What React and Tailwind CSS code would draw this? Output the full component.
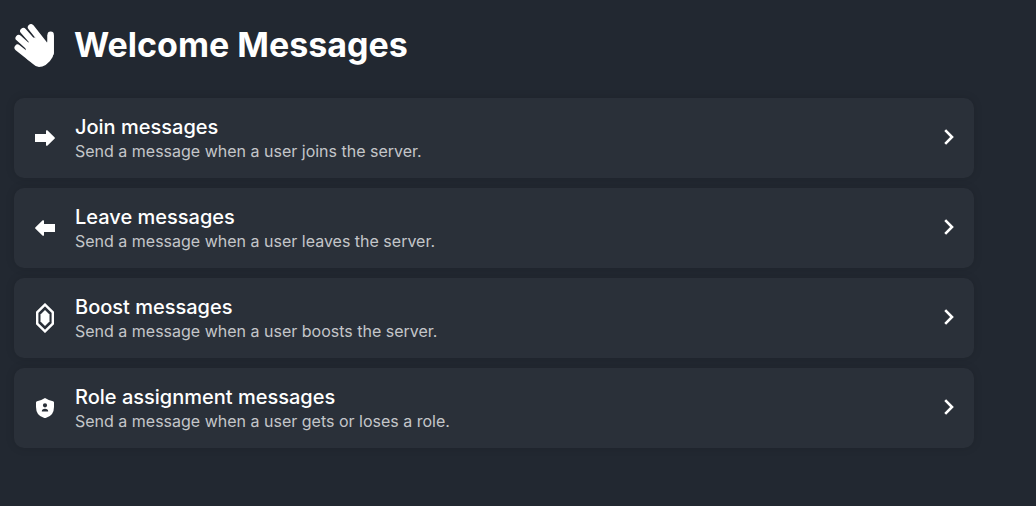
function WaveIcon() {
  return (
    <svg viewBox="42 42 120 129" className="h-[43px] w-10 shrink-0" aria-hidden="true">
      <g stroke="currentColor" strokeWidth="19" strokeLinecap="round" fill="none">
        <path d="M93 52L132 101" />
        <path d="M70 63L108 106" />
        <path d="M56 84L98 122" />
        <path d="M53 113L92 144" />
        <path d="M152 74V128" />
      </g>
      <path
        fill="currentColor"
        d="M102 82L137 99Q142 101 142.500 94V74L161.500 76V128Q160 142 150 153L137 165Q127 171 117 171Q106 170 96 160L80 146L76 106L87 96Z"
      />
    </svg>
  )
}

function ArrowRightIcon() {
  return (
    <svg viewBox="0 0 20 16" className="h-4 w-5" fill="currentColor">
      <path d="M0 4H11V.8Q11.2 -.2 12.300 .3L19.500 7.200Q20.300 8 19.500 8.800L12.300 15.700Q11.200 16.200 11 15.200V12H0Z" />
    </svg>
  )
}

function ArrowLeftIcon() {
  return (
    <svg viewBox="0 0 20 16" className="h-4 w-5" fill="currentColor">
      <path d="M20 4H9V.8Q8.800 -.2 7.700 .3L.5 7.200Q-.3 8 .5 8.800L7.700 15.700Q8.800 16.200 9 15.200V12H20Z" />
    </svg>
  )
}

function BoostIcon() {
  return (
    <svg viewBox="0 0 18 30" className="h-[30px] w-[18px]">
      <path
        fill="none"
        stroke="currentColor"
        strokeWidth="2.4"
        d="M9 1.6L16.8 9.3V20.7L9 28.4L1.2 20.7V9.3Z"
      />
      <path fill="currentColor" d="M9 7L13.5 11.5V18.5L9 23L4.5 18.5V11.5Z" />
    </svg>
  )
}

function ShieldIcon() {
  return (
    <svg viewBox="0 0 18 20" className="h-5 w-[18px]" fill="currentColor">
      <path
        fillRule="evenodd"
        d="M9 0Q12.5 2.2 17 3.2Q18 3.5 18 4.5V9Q18 17.5 10.2 19.8Q9 20.2 7.8 19.8Q0 17.5 0 9V4.5Q0 3.5 1 3.2Q5.5 2.2 9 0ZM9 5.2A2.1 2.1 0 1 0 9 9.4A2.1 2.1 0 1 0 9 5.2ZM5.8 13.6H12.2Q12.2 10.8 9 10.8Q5.8 10.8 5.8 13.6Z"
      />
    </svg>
  )
}

const items = [
  {
    title: 'Join messages',
    description: 'Send a message when a user joins the server.',
    icon: ArrowRightIcon,
  },
  {
    title: 'Leave messages',
    description: 'Send a message when a user leaves the server.',
    icon: ArrowLeftIcon,
  },
  {
    title: 'Boost messages',
    description: 'Send a message when a user boosts the server.',
    icon: BoostIcon,
  },
  {
    title: 'Role assignment messages',
    description: 'Send a message when a user gets or loses a role.',
    icon: ShieldIcon,
  },
]

function MessageCard({ title, description, icon: Icon }) {
  return (
    <button
      type="button"
      className="flex w-full items-center rounded-[10px] bg-[#2a3039] px-5 py-4 text-left shadow-[0_0_10px_rgba(0,0,0,0.12)]"
    >
      <span className="mr-[19px] flex w-[22px] shrink-0 justify-center" aria-hidden="true">
        <Icon />
      </span>
      <span className="min-w-0 flex-1">
        <span className="block text-xl leading-[26px] font-medium text-white">{title}</span>
        <span className="block text-base leading-[22px] text-[#c4c6c9]">{description}</span>
      </span>
      <span className="shrink-0 pb-0.5" aria-hidden="true">
        <svg
          viewBox="0 0 10 16"
          className="h-4 w-2.5"
          fill="none"
          stroke="currentColor"
          strokeWidth="2.6"
        >
          <path d="M1.2 1.2L8 8L1.2 14.8" />
        </svg>
      </span>
    </button>
  )
}

export default function App() {
  return (
    <main className="min-h-screen bg-[#222831] px-3.5 py-6 font-['Inter',sans-serif] text-white">
      <header className="mb-[31px] flex items-center gap-5">
        <WaveIcon />
        <h1 className="pb-0.5 text-[34px] leading-10 font-bold">Welcome Messages</h1>
      </header>
      <div className="flex max-w-[960px] flex-col gap-2.5">
        {items.map((item) => (
          <MessageCard key={item.title} {...item} />
        ))}
      </div>
    </main>
  )
}
